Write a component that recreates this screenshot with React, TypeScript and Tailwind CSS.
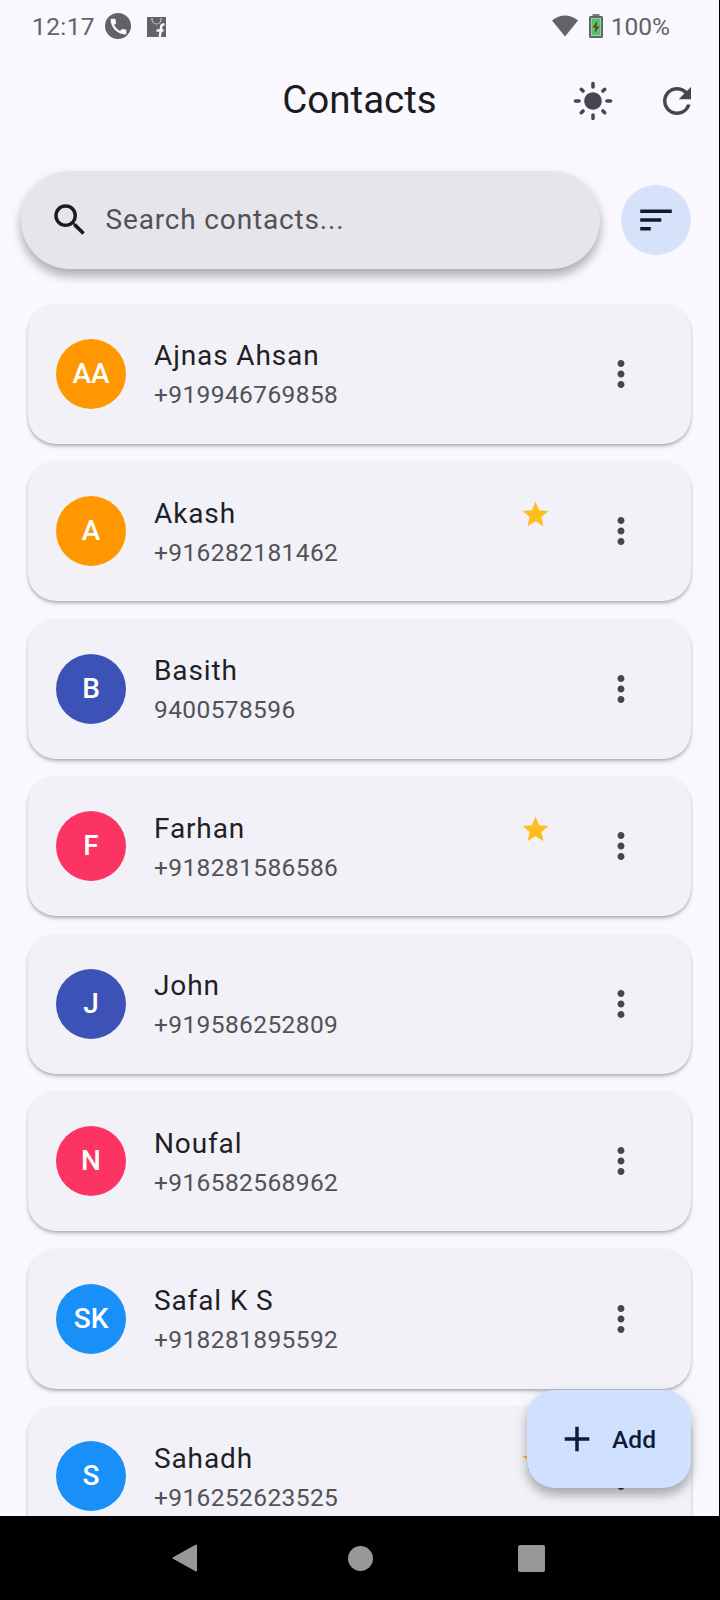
import React from "react";
import { MdAdd, MdCall, MdLightMode, MdMoreVert, MdRefresh, MdSearch, MdSort, MdStar } from "react-icons/md";

type Contact = { initials: string; name: string; phone: string; color: string; starred?: boolean };

const contacts: Contact[] = [
  { initials: "AA", name: "Ajnas Ahsan", phone: "+919946769858", color: "bg-[#ff9800]" },
  { initials: "A", name: "Akash", phone: "+916282181462", color: "bg-[#ff9800]", starred: true },
  { initials: "B", name: "Basith", phone: "9400578596", color: "bg-[#3c52b7]" },
  { initials: "F", name: "Farhan", phone: "+918281586586", color: "bg-[#fb3463]", starred: true },
  { initials: "J", name: "John", phone: "+919586252809", color: "bg-[#3c52b7]" },
  { initials: "N", name: "Noufal", phone: "+916582568962", color: "bg-[#fb3463]" },
  { initials: "SK", name: "Safal K S", phone: "+918281895592", color: "bg-[#198ff8]" },
  { initials: "S", name: "Sahadh", phone: "+916252623525", color: "bg-[#198ff8]", starred: true },
];

function StatusBar() {
  return (
    <div className="flex h-[52px] shrink-0 items-center pl-8 pr-[49px] text-[24.5px] text-[#636267]">
      <span className="w-[72px] pt-[2px] leading-7 tracking-[0.4px]">12:17</span>
      <span className="ml-[1px] flex size-[26px] items-center justify-center rounded-full bg-[#636267]">
        <MdCall className="size-[21px] text-[#f9f8fe]" />
      </span>
      <svg className="ml-[16px] mt-[1px] h-[20px] w-[19px]" viewBox="0 0 19 20">
        <path d="M0 0h19v20H0z" fill="#636267" />
        <path d="M5 1v1.500a4.500 4.500 0 0 0 9 0V1" fill="none" stroke="#c4c3c8" strokeWidth="1.2" />
        <path d="M17.500 7.500h-1q-2 0-2.300 2L12.800 20M9.500 13.500h7" fill="none" stroke="#f9f8fe" strokeWidth="2.4" />
      </svg>
      <svg className="ml-auto h-[22px] w-[26px]" viewBox="0 0 26 22">
        <path d="M0 5.500Q13-4.500 26 5.500L13 21.500Z" fill="#636267" />
      </svg>
      <svg className="ml-[11px] h-[24px] w-[14px]" viewBox="0 0 14 24">
        <path d="M3.500 0h7v3h-7z" fill="#7c7b80" />
        <rect x="1" y="3" width="12" height="20" rx="0.5" fill="#58c266" stroke="#636267" strokeWidth="2" />
        <rect x="2.300" y="4.300" width="9.400" height="17.400" fill="none" stroke="#b9dcc0" strokeWidth="0.7" />
        <path d="M8.200 7l-4.700 6.500h3l-.8 5.500 4.800-6.500h-3z" fill="#6b3d20" />
      </svg>
      <span className="ml-[8px] pt-[2px] leading-7">100%</span>
    </div>
  );
}

function ContactCard({ initials, name, phone, color, starred }: Contact) {
  return (
    <div className="flex h-[140px] shrink-0 items-center rounded-[28px] bg-[#f2f1f8] pl-7 pr-[49px] shadow-[0_2px_3px_rgba(0,0,0,0.22),0_3px_5px_rgba(0,0,0,0.09)]">
      <div className={`flex size-[70px] shrink-0 items-center justify-center rounded-full text-[28px] font-medium text-white ${color}`}>
        {initials}
      </div>
      <div className="ml-7 flex-1">
        <div className="pb-px text-[28px] leading-[41px] tracking-[0.875px] text-[#1f1f24]">{name}</div>
        <div className="text-[24.5px] leading-[35px] tracking-[0.39px] text-[#515156]">{phone}</div>
      </div>
      {starred && <MdStar className="mb-[34px] mr-[49px] size-[31px] text-[#ffbd20]" />}
      <MdMoreVert className="size-[42px] text-[#45464c]" />
    </div>
  );
}

export default function App() {
  return (
    <div className="flex h-[1600px] w-[720px] flex-col overflow-hidden bg-black font-[Roboto,sans-serif]">
      <div className="relative flex h-[1516px] w-[719px] flex-col overflow-hidden bg-[#f9f8fe]">
        <StatusBar />
        <header className="grid h-[98px] shrink-0 grid-cols-[1fr_auto_1fr] items-center pr-[21px]">
          <span />
          <h1 className="pb-[4px] pl-[21px] text-[38.5px] leading-[49px] text-[#1b1b20]">Contacts</h1>
          <div className="flex justify-end gap-[42px]">
            <MdLightMode className="size-[42px] text-[#45464f]" />
            <MdRefresh className="size-[42px] text-[#45464f]" />
          </div>
        </header>
        <div className="mt-[21px] flex shrink-0 items-center gap-[21px] pl-[21px] pr-7">
          <div className="flex h-[98px] flex-1 items-center rounded-full bg-[#e6e5ea] pl-7 shadow-[0_7px_10px_rgba(0,0,0,0.24),0_5px_14px_rgba(0,0,0,0.09)]">
            <MdSearch className="size-[42px] text-[#1b1b20]" />
            <span className="ml-[14.5px] text-[28px] tracking-[0.84px] text-[#515156]">Search contacts...</span>
          </div>
          <button className="flex size-[70px] items-center justify-center rounded-full bg-[#d6e2f9]">
            <MdSort className="size-[42px] text-[#111a2c]" />
          </button>
        </div>
        <main className="flex flex-col gap-[17.5px] px-7 pt-[34.9px]">
          {contacts.map((c) => (
            <ContactCard key={c.name} {...c} />
          ))}
        </main>
        <button className="absolute bottom-7 right-7 flex h-[98px] w-[164px] items-center rounded-[28px] bg-[#cfe1ff] pl-[29px] text-[24.5px] font-medium text-[#0f1b37] shadow-[0_7px_10px_rgba(0,0,0,0.22),0_5px_16px_rgba(0,0,0,0.12)]">
          <MdAdd className="size-[42px]" />
          <span className="ml-[14px] pt-[2px] tracking-[0.1px]">Add</span>
        </button>
      </div>
      <nav className="flex h-[84px] items-center bg-black pl-[172px]">
        <svg className="h-[28px] w-[25px]" viewBox="0 0 25 28">
          <path d="M1.500 14L24 1.500v25z" fill="#98989a" stroke="#98989a" strokeWidth="2" strokeLinejoin="round" />
        </svg>
        <span className="ml-[150.5px] size-[25px] rounded-full bg-[#98989a]" />
        <span className="ml-[145.5px] size-[27px] rounded-[2px] bg-[#98989a]" />
      </nav>
    </div>
  );
}
